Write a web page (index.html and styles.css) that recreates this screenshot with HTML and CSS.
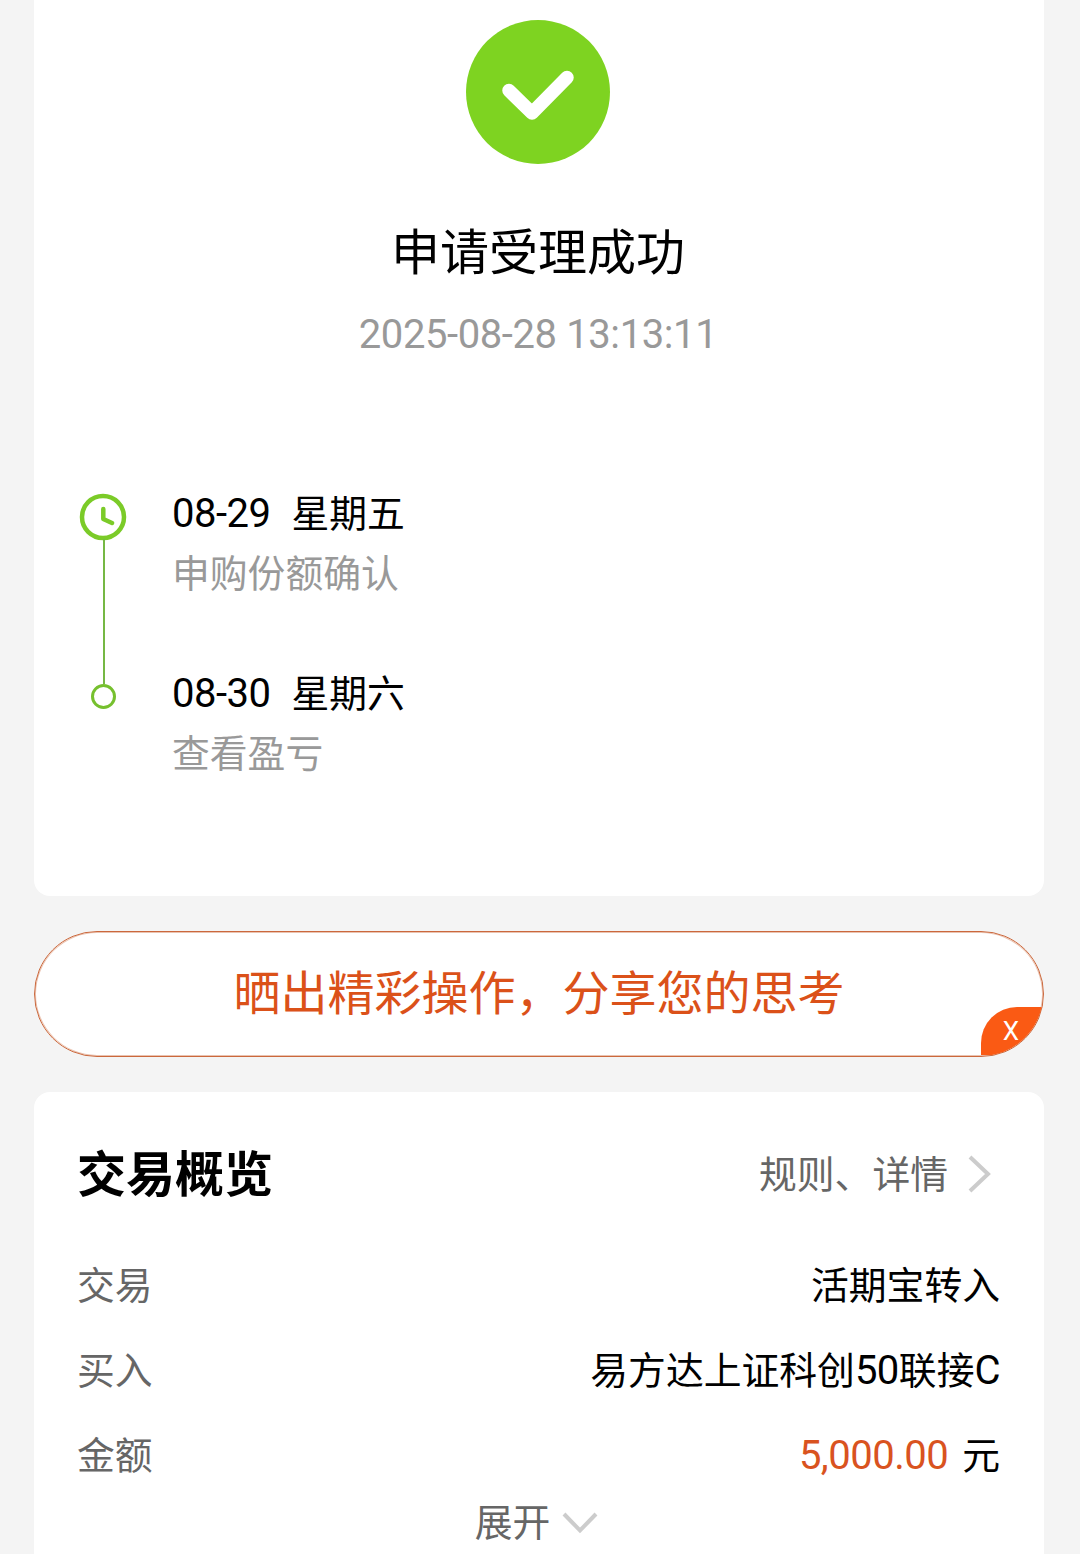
FILE: index.html
```html
<!DOCTYPE html>
<html lang="zh-CN">
  <head>
    <meta charset="UTF-8" />
    <meta name="viewport" content="width=device-width, initial-scale=1.0" />
    <title>交易结果</title>
    <link rel="stylesheet" href="styles.css">
  </head>
  <body>
    <div class="card result">
      <svg class="success" viewBox="0 0 144 144">
        <circle cx="72" cy="72" r="72" fill="#7ed321" />
        <path d="M43 70.5L66 93L101 57.5" fill="none" stroke="#fff" stroke-width="13.5" stroke-linecap="round" stroke-linejoin="round" />
      </svg>
      <h1>申请受理成功</h1>
      <p class="time">2025-08-28 13:13:11</p>
      <div class="steps">
        <div class="line">
          <svg class="clock" viewBox="0 0 48 48">
            <circle cx="24" cy="24" r="21" />
            <path d="M24.3 16V26L33 30" />
          </svg>
          <span class="bar"></span>
          <span class="dot"></span>
        </div>
        <ul>
          <li>
            <p class="date"><span class="num">08-29</span>星期五</p>
            <p class="desc">申购份额确认</p>
          </li>
          <li>
            <p class="date"><span class="num">08-30</span>星期六</p>
            <p class="desc">查看盈亏</p>
          </li>
        </ul>
      </div>
    </div>

    <div class="share">
      <span class="share-text">晒出精彩操作，分享您的思考</span>
      <span class="close">X</span>
    </div>

    <div class="card overview">
      <div class="head">
        <h2>交易概览</h2>
        <span class="rule">规则、详情</span>
        <svg class="arrow" viewBox="0 0 24 38"><path d="M2 2L20 19L2 36" /></svg>
      </div>
      <div class="row"><span>交易</span><span class="val">活期宝转入</span></div>
      <div class="row"><span>买入</span><span class="val">易方达上证科创<span class="num">50</span>联接<span class="num">C</span></span></div>
      <div class="row"><span>金额</span><span class="val"><span class="money">5,000.00</span>元</span></div>
      <div class="more">
        <span>展开</span>
        <svg class="down" viewBox="0 0 36 22"><path d="M2 2L18 18.5L34 2" /></svg>
      </div>
    </div>
  </body>
</html>
```
FILE: styles.css
```css
* {
  box-sizing: border-box;
  margin: 0;
  padding: 0;
}
body {
  height: 1554px;
  padding: 0 36px 0 34px;
  overflow: hidden;
  background: #f4f4f4;
  color: #000;
  font-family: Roboto, "Noto Sans CJK SC", sans-serif;
  font-size: 37.8px;
}
.card {
  background: #fff;
}
.result {
  display: flex;
  flex-direction: column;
  align-items: center;
  height: 896px;
  padding: 20px 46px 0 44px;
  border-radius: 0 0 16px 16px;
}
.success {
  width: 144px;
  height: 144px;
}
h1 {
  margin-top: 54px;
  font-size: 49px;
  font-weight: 400;
  line-height: 72px;
}
.time {
  margin-top: 16px;
  color: #999;
  font-size: 40px;
  letter-spacing: -0.4px;
  line-height: 58px;
}
.steps {
  display: flex;
  align-self: stretch;
  margin-top: 120px;
}
.line {
  display: flex;
  flex-direction: column;
  align-items: center;
  width: 48px;
  margin: 9px 0 0 1px;
}
.clock {
  width: 48px;
  height: 48px;
  fill: none;
  stroke: #7bcb28;
  stroke-width: 4.5;
  stroke-linecap: round;
  stroke-linejoin: round;
}
.bar {
  width: 2px;
  height: 145px;
  margin: -2px 0 0 2px;
  background: #76b844;
}
.dot {
  width: 25px;
  height: 25px;
  margin-left: 1px;
  border: 3px solid #76c02e;
  border-radius: 50%;
}
ul {
  margin-left: 45px;
  list-style: none;
}
li {
  height: 180px;
}
.date,
.desc {
  line-height: 60px;
}
.date .num {
  margin-right: 21px;
  letter-spacing: -0.5px;
}
.num {
  font-size: 40px;
}
.val .num {
  letter-spacing: -0.5px;
}
.desc {
  color: #999;
}
.share {
  position: relative;
  height: 126px;
  margin: 35px 0;
  overflow: hidden;
  border: 1px solid #cb683c;
  border-radius: 63px;
  background: #fff;
  box-shadow: inset 0 0 0 1px rgba(203, 104, 60, 0.4);
  color: #db5119;
  font-size: 47px;
  line-height: 123px;
  text-align: center;
}
.close {
  position: absolute;
  right: 0;
  bottom: 1px;
  width: 62px;
  height: 48px;
  padding-right: 2px;
  border-top-left-radius: 36px;
  background: #fa5a14;
  color: #fff;
  font-size: 26px;
  line-height: 48px;
}
.overview {
  height: 480px;
  padding: 40px 44px 0 43px;
  border-radius: 16px 16px 0 0;
}
.head {
  display: flex;
  align-items: center;
  height: 84px;
}
h2 {
  flex: 1;
  padding-bottom: 8px;
  font-size: 49px;
  font-weight: 700;
}
.rule,
.row,
.more {
  color: #666;
}
.rule {
  padding-bottom: 5px;
}
.arrow {
  width: 24px;
  height: 38px;
  margin: 0 8px 0 20px;
}
.arrow,
.down {
  fill: none;
  stroke: #ccc;
  stroke-width: 4;
}
.row {
  display: flex;
  justify-content: space-between;
  height: 85px;
  line-height: 60px;
}
.row:nth-child(2) {
  margin-top: 40px;
}
.val {
  color: #000;
}
.money {
  margin-right: 14px;
  color: #d9531f;
  font-size: 40px;
  letter-spacing: -0.5px;
}
.more {
  display: flex;
  justify-content: center;
  align-items: center;
  height: 56px;
  margin-top: -20px;
  padding-right: 4px;
}
.down {
  width: 36px;
  height: 22px;
  margin: 7px 0 0 12px;
}
```
